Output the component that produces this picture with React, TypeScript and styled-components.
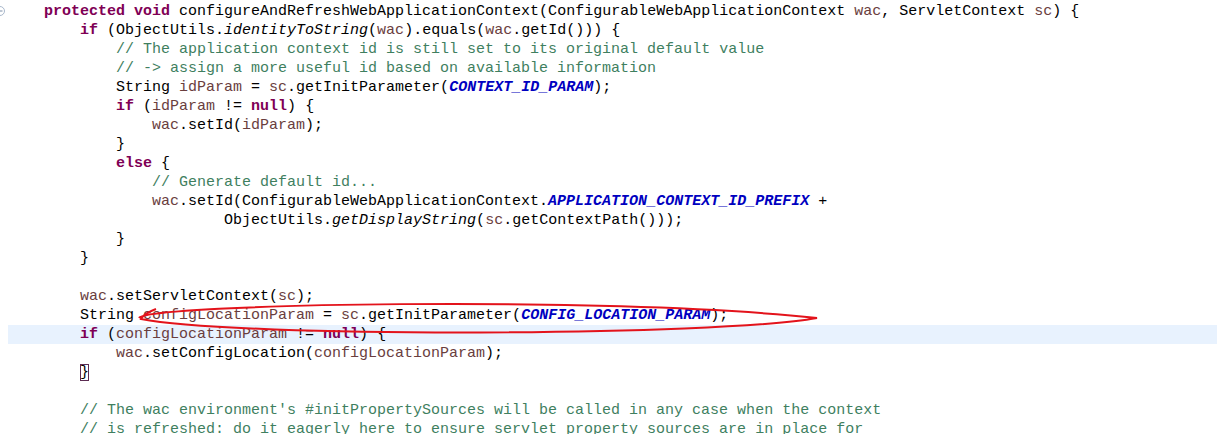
import styled, { createGlobalStyle } from "styled-components";

const GlobalStyle = createGlobalStyle`
  html, body {
    margin: 0;
    padding: 0;
    background: #ffffff;
  }
`;

const Editor = styled.div`
  position: relative;
  display: flex;
  width: 1217px;
  height: 434px;
  overflow: hidden;
  background: #ffffff;
`;

const Gutter = styled.div`
  flex: 0 0 8px;
  padding-top: 2px;
  overflow: hidden;
`;

const FoldMark = styled.svg`
  display: block;
  width: 8px;
  height: 19px;
`;

const Code = styled.div`
  flex: 1;
  padding-top: 2px;
  font-family: "Liberation Mono", "DejaVu Sans Mono", monospace;
  font-size: 15px;
  line-height: 19px;
  color: #000000;
`;

const Line = styled.div<{ $current?: boolean }>`
  height: 19px;
  white-space: pre;
  background: ${(p) => (p.$current ? "#e8f2fe" : "transparent")};
`;

const Kw = styled.span`
  color: #7f0055;
  font-weight: 700;
`;

const Cm = styled.span`
  color: #3f7f5f;
`;

const Var = styled.span`
  color: #6a3e3e;
`;

const Const = styled.span`
  color: #0000c0;
  font-weight: 700;
  font-style: italic;
`;

const Static = styled.span`
  font-style: italic;
`;

const Match = styled.span`
  outline: 1px solid #5c2c52;
  outline-offset: -1px;
`;

const Annotation = styled.svg`
  position: absolute;
  left: 0;
  top: 0;
  pointer-events: none;
`;

export default function App() {
  return (
    <>
      <GlobalStyle />
      <Editor>
        <Gutter>
          <FoldMark viewBox="0 0 8 19">
            <circle cx="0" cy="9" r="4.5" fill="#ffffff" stroke="#a9b8cc" strokeWidth="1" />
            <line x1="0" y1="9" x2="2.5" y2="9" stroke="#7d8fa8" strokeWidth="1" />
          </FoldMark>
        </Gutter>
        <Code>
          <Line>
            {"    "}<Kw>protected</Kw> <Kw>void</Kw> configureAndRefreshWebApplicationContext(ConfigurableWebApplicationContext <Var>wac</Var>, ServletContext <Var>sc</Var>) {"{"}
          </Line>
          <Line>
            {"        "}<Kw>if</Kw> (ObjectUtils.<Static>identityToString</Static>(<Var>wac</Var>).equals(<Var>wac</Var>.getId())) {"{"}
          </Line>
          <Line>
            {"            "}<Cm>// The application context id is still set to its original default value</Cm>
          </Line>
          <Line>
            {"            "}<Cm>// -&gt; assign a more useful id based on available information</Cm>
          </Line>
          <Line>
            {"            "}String <Var>idParam</Var> = <Var>sc</Var>.getInitParameter(<Const>CONTEXT_ID_PARAM</Const>);
          </Line>
          <Line>
            {"            "}<Kw>if</Kw> (<Var>idParam</Var> != <Kw>null</Kw>) {"{"}
          </Line>
          <Line>
            {"                "}<Var>wac</Var>.setId(<Var>idParam</Var>);
          </Line>
          <Line>{"            }"}</Line>
          <Line>
            {"            "}<Kw>else</Kw> {"{"}
          </Line>
          <Line>
            {"                "}<Cm>// Generate default id...</Cm>
          </Line>
          <Line>
            {"                "}<Var>wac</Var>.setId(ConfigurableWebApplicationContext.<Const>APPLICATION_CONTEXT_ID_PREFIX</Const> +
          </Line>
          <Line>
            {"                        "}ObjectUtils.<Static>getDisplayString</Static>(<Var>sc</Var>.getContextPath()));
          </Line>
          <Line>{"            }"}</Line>
          <Line>{"        }"}</Line>
          <Line />
          <Line>
            {"        "}<Var>wac</Var>.setServletContext(<Var>sc</Var>);
          </Line>
          <Line>
            {"        "}String <Var>configLocationParam</Var> = <Var>sc</Var>.getInitParameter(<Const>CONFIG_LOCATION_PARAM</Const>);
          </Line>
          <Line $current>
            {"        "}<Kw>if</Kw> (<Var>configLocationParam</Var> != <Kw>null</Kw>) {"{"}
          </Line>
          <Line>
            {"            "}<Var>wac</Var>.setConfigLocation(<Var>configLocationParam</Var>);
          </Line>
          <Line>
            {"        "}<Match>{"}"}</Match>
          </Line>
          <Line />
          <Line>
            {"        "}<Cm>// The wac environment's #initPropertySources will be called in any case when the context</Cm>
          </Line>
          <Line>
            {"        "}<Cm>// is refreshed: do it eagerly here to ensure servlet property sources are in place for</Cm>
          </Line>
        </Code>
        <Annotation width="1217" height="434" viewBox="0 0 1217 434">
          <path
            d="M 139 318 C 150 304, 600 295, 817 318 C 720 336, 240 338, 141 319 C 143 315, 148 312, 156 309"
            fill="none"
            stroke="#e3131b"
            strokeWidth="2"
          />
        </Annotation>
      </Editor>
    </>
  );
}
